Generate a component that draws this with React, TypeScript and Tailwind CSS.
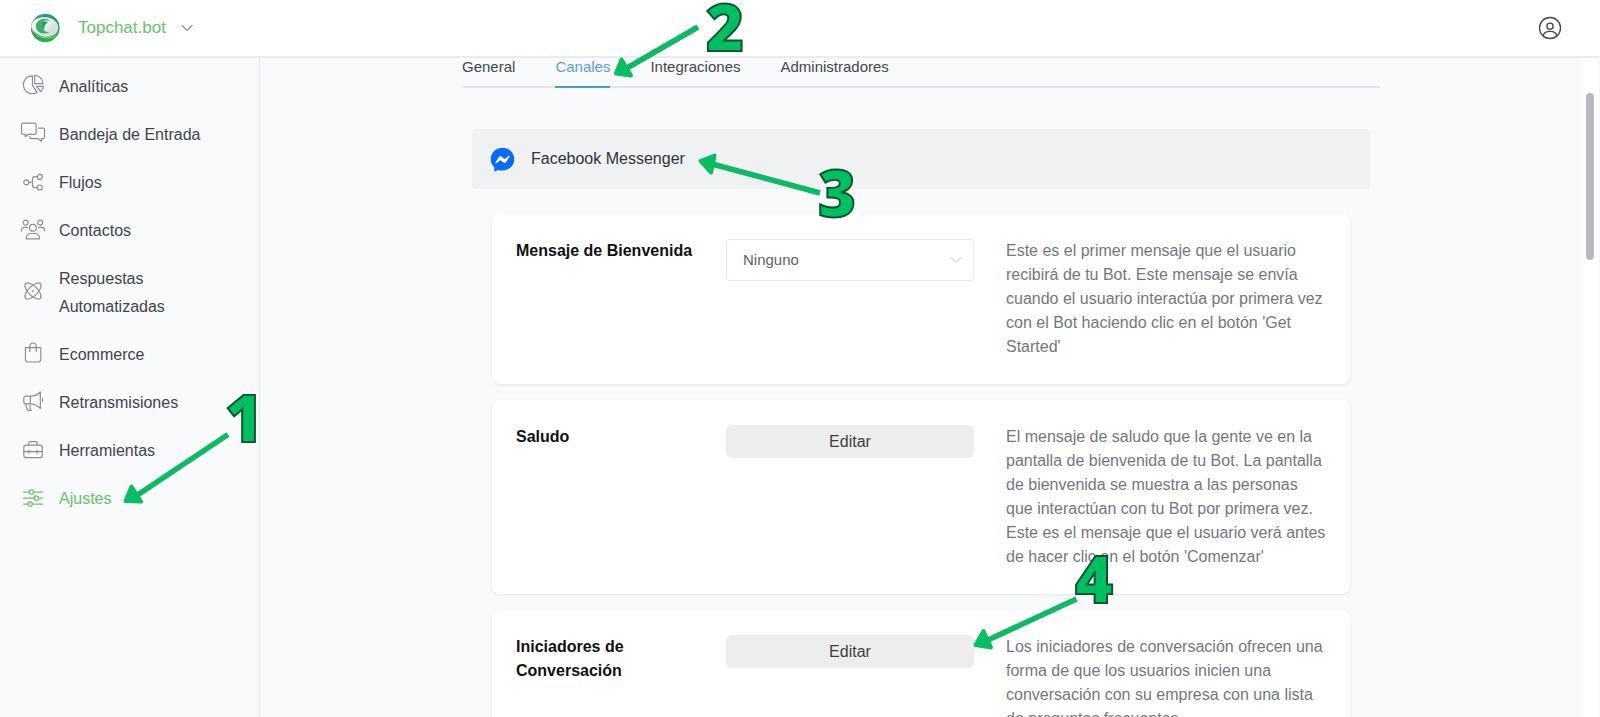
import type { ReactNode } from "react";

interface NavItem {
  label: string;
  icon: ReactNode;
  active?: boolean;
}

interface Setting {
  id: string;
  title: string;
  description: string;
  options?: string[];
}

const navItems: NavItem[] = [
  {
    label: "Analíticas",
    icon: (
      <>
        <path d="M11.5 0.9a8.9 8.9 0 1 0 4.6 16.4L11.5 10.3z" />
        <path d="M13.7 0.4v8.3h8.3a8.4 8.4 0 0 0-8.3-8.3z" />
        <path d="M15.6 11.3h6.9a8 8 0 0 1-2.7 5.2z" />
      </>
    ),
  },
  {
    label: "Bandeja de Entrada",
    icon: (
      <>
        <path d="M2 0.2h11.7a1.5 1.5 0 0 1 1.5 1.5v8.1a1.5 1.5 0 0 1-1.5 1.5H7.2l-2.9 2.4v-2.4H2a1.5 1.5 0 0 1-1.5-1.5V1.7A1.5 1.5 0 0 1 2 0.2z" />
        <path d="M17.4 5.1h4.600a1.500 1.500 0 0 1 1.500 1.500v7.600a1.500 1.500 0 0 1-1.500 1.500h-1.600v2.600l-3.200-2.600h-6.800a1.500 1.500 0 0 1-1.500-1.500v-0.900" />
      </>
    ),
  },
  {
    label: "Flujos",
    icon: (
      <>
        <circle cx="5.3" cy="11.3" r="2.5" />
        <circle cx="18.8" cy="5.9" r="2.5" />
        <circle cx="18.8" cy="16.5" r="2.5" />
        <path d="M7.9 11.3h3.6M16.2 5.6h-2.3a2.4 2.4 0 0 0-2.4 2.4v6.2a2.4 2.4 0 0 0 2.4 2.4h2.3" />
      </>
    ),
  },
  {
    label: "Contactos",
    icon: (
      <>
        <circle cx="4.6" cy="3.6" r="2.5" />
        <circle cx="19.2" cy="3.6" r="2.5" />
        <circle cx="11.9" cy="8.8" r="3.4" />
        <path d="M5.4 19.9v-1.3a4.3 4.3 0 0 1 4.3-4.1h4.4a4.3 4.3 0 0 1 4.3 4.1v1.3z" />
        <path d="M0.5 12v-1.1a2.6 2.6 0 0 1 2.6-2.6h2.2l1.2 0.5M23.5 12v-1.1a2.6 2.6 0 0 0-2.6-2.6h-2.2l-1.2 0.5" />
      </>
    ),
  },
  {
    label: "Respuestas Automatizadas",
    icon: (
      <>
        <ellipse cx="12" cy="10" rx="10.4" ry="4.7" transform="rotate(45 12 10)" />
        <ellipse cx="12" cy="10" rx="10.4" ry="4.7" transform="rotate(-45 12 10)" />
        <circle cx="12" cy="10" r="0.4" />
      </>
    ),
  },
  {
    label: "Ecommerce",
    icon: (
      <>
        <path d="M4.4 4.6h15.400v11.700a2.700 2.700 0 0 1-2.700 2.700H7.100a2.700 2.700 0 0 1-2.700-2.700z" />
        <path d="M8.9 8.4V3.200a3.200 3.200 0 0 1 6.400 0v5.200" />
      </>
    ),
  },
  {
    label: "Retransmisiones",
    icon: (
      <>
        <path d="M9.4 5.2H4.8a2 2 0 0 0-2 2v3.6a2 2 0 0 0 2 2h4.6zM9.4 5.2c4 0 7.3-1.7 9.9-4.2v16.4c-2.6-2.6-5.9-4.6-9.9-4.6" />
        <path d="M5 12.8c0 2.8 0.6 5 1.8 6.6h3.3c-0.9-1.5-1.3-3.2-1.1-5M21.5 7.6v2.6" />
      </>
    ),
  },
  {
    label: "Herramientas",
    icon: (
      <>
        <rect x="2.8" y="6.2" width="18.5" height="12.4" rx="2.4" />
        <path d="M7.8 6.2V4.5a1.8 1.8 0 0 1 1.8-1.8h4.8a1.8 1.8 0 0 1 1.8 1.8v1.7M2.8 12.6h4.3M8.7 12.6h6.6M16.9 12.6h4.4M7.9 11.2v3M16.1 11.2v3" />
      </>
    ),
  },
  {
    label: "Ajustes",
    active: true,
    icon: (
      <>
        <circle cx="10.4" cy="5.1" r="2.2" />
        <circle cx="15.3" cy="11.1" r="2.2" />
        <circle cx="9.2" cy="17.1" r="2.2" />
        <path d="M2.6 5.1h5.6M12.6 5.1h9.1M2.6 11.1h10.5M17.5 11.1h4.2M2.6 17.1H7M11.4 17.1h10.3" />
      </>
    ),
  },
];

const tabs = ["General", "Canales", "Integraciones", "Administradores"];

const settings: Setting[] = [
  {
    id: "bienvenida",
    title: "Mensaje de Bienvenida",
    description:
      "Este es el primer mensaje que el usuario recibirá de tu Bot. Este mensaje se envía cuando el usuario interactúa por primera vez con el Bot haciendo clic en el botón 'Get Started'",
    options: ["Ninguno"],
  },
  {
    id: "saludo",
    title: "Saludo",
    description:
      "El mensaje de saludo que la gente ve en la pantalla de bienvenida de tu Bot. La pantalla de bienvenida se muestra a las personas que interactúan con tu Bot por primera vez. Este es el mensaje que el usuario verá antes de hacer clic en el botón 'Comenzar'",
  },
  {
    id: "iniciadores",
    title: "Iniciadores de Conversación",
    description:
      "Los iniciadores de conversación ofrecen una forma de que los usuarios inicien una conversación con su empresa con una lista de preguntas frecuentes.",
  },
];

// Numbered steps of the walkthrough, with the arrow that leads from each one.
const steps = [
  { n: "1", x: 244, y: 442, line: "M228 434.5L136 496", head: "M125.5 501L131.5 486.5L141 501.5Z" },
  { n: "2", x: 725, y: 51, line: "M698 27L627 68", head: "M616 73.5L621.5 59.5L631 75.5Z" },
  { n: "3", x: 837, y: 217, line: "M820 193L712 164", head: "M700.5 161L714.5 155.5L711 172.5Z" },
  { n: "4", x: 1094, y: 603, line: "M1076.5 599L988 640", head: "M975.5 645L983.5 631L991 647.5Z" },
];

function Logo() {
  return (
    <svg viewBox="0 0 30 30" className="h-[30px] w-[30px]" aria-hidden="true">
      <defs>
        <linearGradient id="globe" x1="0" y1="0" x2="0.4" y2="1">
          <stop offset="0" stopColor="#3fa9a0" />
          <stop offset="0.5" stopColor="#1f8a72" />
          <stop offset="1" stopColor="#2fae4c" />
        </linearGradient>
        <linearGradient id="swirl" x1="0" y1="0" x2="1" y2="1">
          <stop offset="0" stopColor="#ffffff" />
          <stop offset="1" stopColor="#c9d6d3" />
        </linearGradient>
      </defs>
      <circle cx="15.3" cy="15" r="14.3" fill="url(#globe)" />
      <path d="M1.2 13C2.500 5.500 11 3.400 18 4.600C26 6 30 12.500 27.500 18C24.500 24.600 14.500 25.400 8.500 21.800C4 19 1.300 16.500 1.200 13z" fill="url(#swirl)" />
      <ellipse cx="14.2" cy="13.200" rx="8.400" ry="7.400" fill="#3fae6c" />
      <path d="M12.500 8.200C17 6 25.500 9 25.300 14.500C25 20 18.300 20.800 14.600 17.800C11.500 15.200 10.400 10.800 12.500 8.200z" fill="url(#swirl)" />
      <path d="M12.300 8.600C10.200 11.200 11.600 15 14.600 17.200C13.800 14.200 14.600 11.400 18 9.600C16 8.200 13.600 7.800 12.300 8.600z" fill="#2e9a62" />
      <path d="M2 17C6 24.500 17 27.300 26.500 23" fill="none" stroke="#7bdc7f" strokeWidth="1" />
    </svg>
  );
}

function MessengerIcon() {
  return (
    <svg viewBox="0 0 26 26" className="h-[25px] w-[25px]" aria-hidden="true">
      <path d="M13 0.8C6.1 0.8 0.8 6 0.8 12.8c0 3.3 1.2 6.1 3.6 8.2v4c0 0.4 0.3 0.6 0.7 0.4l3.6-1.6c1.3 0.5 2.7 0.7 4.3 0.7c6.900 0 12.200-5 12.200-11.700S19.900 0.800 13 0.800z" fill="#0a6cf5" />
      <path d="M5.700 16.200L9.300 10.500a1.800 1.800 0 0 1 2.600-0.500l2.900 2.100a0.700 0.700 0 0 0 0.900 0l3.800-2.900c0.500-0.400 1.200 0.200 0.800 0.800l-3.600 5.600a1.800 1.800 0 0 1-2.600 0.500l-2.800-2.100a0.700 0.700 0 0 0-0.900 0l-3.900 2.900c-0.500 0.400-1.200-0.200-0.800-0.700z" fill="#fff" />
    </svg>
  );
}

function Chevron({ className }: { className: string }) {
  return (
    <svg viewBox="0 0 12 8" className={className} fill="none" stroke="currentColor" strokeLinecap="round" strokeLinejoin="round" aria-hidden="true">
      <path d="M1 1.500L6 6.500L11 1.500" />
    </svg>
  );
}

function Header() {
  return (
    <header className="flex h-[58px] shrink-0 items-center justify-between border-b-2 border-[#ebebed] bg-white pr-[38px] pl-[30px]">
      <button type="button" className="flex items-center text-[17px] text-[#67c26b]">
        <Logo />
        <span className="ml-[18px]">Topchat.bot</span>
        <Chevron className="ml-[15px] h-2 w-3 text-[#444]" />
      </button>
      <button type="button" aria-label="Cuenta" className="text-[#444]">
        <svg viewBox="0 0 24 24" className="h-6 w-6" fill="none" stroke="currentColor" strokeWidth="1.300">
          <circle cx="12" cy="12" r="10.500" />
          <circle cx="12" cy="10.200" r="3.100" />
          <path d="M5.300 19.800c0.400-3.200 3-4.500 6.700-4.500s6.300 1.300 6.700 4.500" />
        </svg>
      </button>
    </header>
  );
}

function Sidebar() {
  return (
    <nav className="w-[260px] shrink-0 border-r border-[#e3e4e9] pt-[5px]">
      {navItems.map((item) => (
        <a
          key={item.label}
          href="#"
          className={`flex items-center gap-[14px] py-[10px] pr-8 pl-[21px] text-base leading-7 ${
            item.active ? "text-[#67c26b]" : "text-[#3f444d]"
          }`}
        >
          <svg
            viewBox="0 0 24 24"
            className={`h-6 w-6 shrink-0 overflow-visible ${item.active ? "" : "text-[#8d8f93]"}`}
            fill="none"
            stroke="currentColor"
            strokeWidth="1.200"
            strokeLinejoin="round"
            strokeLinecap="round"
            aria-hidden="true"
          >
            {item.icon}
          </svg>
          <span className="w-36">{item.label}</span>
        </a>
      ))}
    </nav>
  );
}

function SettingCard({ setting }: { setting: Setting }) {
  return (
    <section className="grid grid-cols-[178px_248px_1fr] items-start gap-8 rounded-lg bg-white px-6 py-[25px] shadow-[0_1px_3px_rgba(60,70,90,0.11)]">
      <h2 id={setting.id} className="text-base leading-6 font-bold text-[#111]">
        {setting.title}
      </h2>
      {setting.options ? (
        <div className="relative">
          <select
            aria-labelledby={setting.id}
            className="h-[42px] w-full appearance-none rounded border border-[#e8e9ec] bg-white px-4 text-[15px] text-[#606266]"
          >
            {setting.options.map((option) => (
              <option key={option}>{option}</option>
            ))}
          </select>
          <Chevron className="pointer-events-none absolute top-[17px] right-3 h-2 w-3 text-[#b8bbc2]" />
        </div>
      ) : (
        <button
          type="button"
          aria-describedby={setting.id}
          className="h-[33px] rounded-md bg-[#ededed] text-base text-[#3c3f44]"
        >
          Editar
        </button>
      )}
      <p className="text-base leading-6 text-[#73777d]">{setting.description}</p>
    </section>
  );
}

export default function App() {
  return (
    <div className="relative flex h-screen flex-col overflow-hidden bg-[#f8fafc] font-['Liberation_Sans',Arial,sans-serif]">
      <Header />
      <div className="flex min-h-0 flex-1">
        <Sidebar />
        <main className="min-w-0 flex-1 overflow-hidden">
          <div className="mx-auto max-w-[918px]">
            <div className="flex gap-10 border-b-2 border-[#e2e5ec]">
              {tabs.map((tab) => (
                <a
                  key={tab}
                  href="#"
                  className={`-mb-[2px] border-b-2 pb-[10px] text-[15px] leading-[18px] ${
                    tab === "Canales"
                      ? "border-[#5295db] text-[#5b9ee3]"
                      : "border-transparent text-[#44474c]"
                  }`}
                >
                  {tab}
                </a>
              ))}
            </div>
            <div className="mx-[10px] mt-[41px] flex h-[60px] items-center gap-4 rounded bg-[#f0f1f3] px-[18px]">
              <MessengerIcon />
              <h1 className="text-base text-[#303338]">Facebook Messenger</h1>
            </div>
            <div className="mx-[30px] mt-[25px] flex flex-col gap-4">
              {settings.map((setting) => (
                <SettingCard key={setting.id} setting={setting} />
              ))}
            </div>
          </div>
        </main>
        <div className="w-[18px] shrink-0 border-r border-[#f5f6f8] bg-white pt-[35px] pl-1">
          <div className="h-[167px] w-2 rounded-full bg-[#b9b8bf]" />
        </div>
      </div>

      <svg
        viewBox="0 0 1600 717"
        className="pointer-events-none absolute top-0 left-0 h-[717px] w-[1600px] max-w-none"
      >
        {steps.map((step) => (
          <g key={step.n}>
            <path d={step.line} stroke="#0fb865" strokeWidth="5.500" />
            <path d={step.head} fill="#08bd62" stroke="#08bd62" strokeWidth="4" strokeLinejoin="round" />
            <text
              x={step.x}
              y={step.y}
              textAnchor="middle"
              className="fill-[#00bf63] stroke-[#06572f] font-['Open_Sans',sans-serif] text-[65px] font-extrabold"
              strokeWidth="2"
            >
              {step.n}
            </text>
          </g>
        ))}
      </svg>
    </div>
  );
}
